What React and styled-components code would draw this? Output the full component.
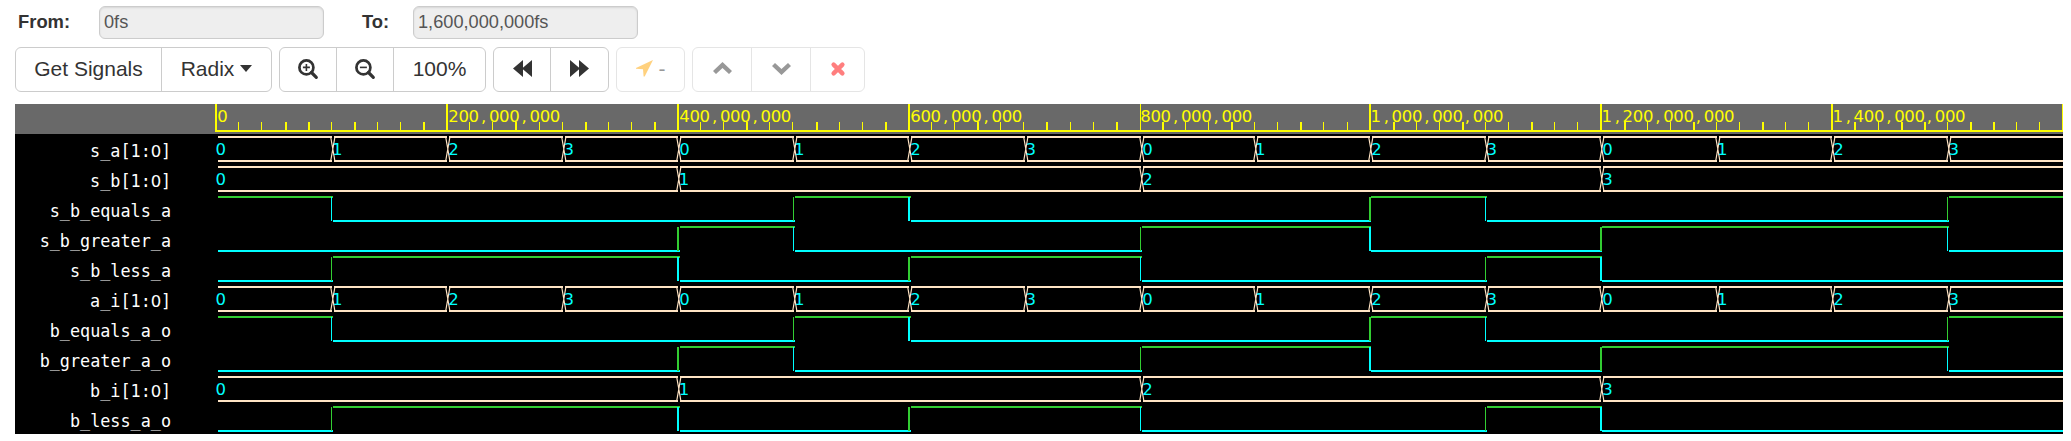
import React from "react";
import styled, { createGlobalStyle, css } from "styled-components";

const Global = createGlobalStyle`
  * { box-sizing: border-box; }
  body { margin: 0; background: #fff; color: #333; overflow: hidden; font-family: "Liberation Sans", Arial, sans-serif; }
`;

const Page = styled.main`
  height: 441px;
  width: 2071px;
  padding: 6px 8px 0 15px;
  overflow: hidden;
`;
const RangeForm = styled.div`
  display: flex;
  align-items: center;
  height: 33px;
`;
const RangeLabel = styled.label`
  width: ${(p) => p.$width}px;
  padding: 0 0 2px ${(p) => p.$inset}px;
  font-size: 18.4px;
  font-weight: 700;
  line-height: 29px;
`;
const RangeInput = styled.input`
  width: 225px;
  height: 33px;
  padding: 0 4px;
  border: 1px solid #ccc;
  border-radius: 6px;
  background: #eee;
  box-shadow: inset 0 1px 2px rgba(0, 0, 0, 0.1);
  color: #555;
  font: 18.2px "Liberation Sans", Arial, sans-serif;
`;
const Toolbar = styled.div`
  display: flex;
  gap: 7px;
  margin-top: 8px;
`;
const ButtonGroup = styled.div`
  display: flex;
  height: 45px;
  border: 1px solid #ccc;
  border-radius: 6px;
  opacity: ${(p) => (p.$disabled ? 0.5 : 1)};
`;
const ToolButton = styled.button`
  display: flex;
  align-items: center;
  justify-content: center;
  gap: 6px;
  width: ${(p) => p.$width}px;
  padding: 0 0 2px;
  border: 0;
  background: transparent;
  color: #333;
  font: 21px "Liberation Sans", Arial, sans-serif;
  white-space: nowrap;
  & + & { border-left: 1px solid #ccc; }
`;
const Glyph = styled.svg`
  display: block;
  overflow: visible;
  fill: currentColor;
  color: ${(p) => p.$color || "#333"};
`;
const Viewer = styled.section`
  display: flex;
  width: 2048px;
  height: 330px;
  margin-top: 12px;
  overflow: hidden;
  background: #000;
`;
const Names = styled.div`
  width: 200px;
`;
const NamesHead = styled.div`
  height: 30px;
  background: #696969;
`;
const digits = css`
  font-family: "DejaVu Sans", sans-serif;
  font-size: 16.5px;
`;
const SignalName = styled.div`
  height: 30px;
  padding: 2px 44px 0 0;
  color: #fff;
  font-family: "DejaVu Sans Mono", monospace;
  font-size: 16.8px;
  line-height: 30px;
  text-align: right;
  white-space: nowrap;
`;
const PlainZero = styled.span`
  ${digits}
  letter-spacing: -0.35px;
`;
const Chart = styled.svg`
  display: block;
  width: 1848px;
  height: 330px;
  text { ${digits} }
`;

const MAJOR = 230.87;
const PITCH = 10.15;
const END = 1848;

const signals = [
  { name: "s_a[1:0]", bus: "0123012301230123" },
  { name: "s_b[1:0]", bus: "0000111122223333" },
  { name: "s_b_equals_a", bits: "1000010000100001" },
  { name: "s_b_greater_a", bits: "0000100011001110" },
  { name: "s_b_less_a", bits: "0111001100010000" },
  { name: "a_i[1:0]", bus: "0123012301230123" },
  { name: "b_equals_a_o", bits: "1000010000100001" },
  { name: "b_greater_a_o", bits: "0000100011001110" },
  { name: "b_i[1:0]", bus: "0000111122223333" },
  { name: "b_less_a_o", bits: "0111001100010000" },
];

const majors = [
  "0", "200,000,000", "400,000,000", "600,000,000", "800,000,000",
  "1,000,000,000", "1,200,000,000", "1,400,000,000", "",
];

function runs(values) {
  const out = [];
  for (let i = 0; i < values.length; i++) {
    if (i === 0 || values[i] !== values[i - 1]) out.push({ start: i, end: i + 1, value: values[i] });
    else out[out.length - 1].end = i + 1;
  }
  return out;
}

// Pixel column and thickness of the i-th 100,000,000fs boundary.
const edge = (i) => {
  if (i === 8) return 925;
  return i % 2 ? Math.ceil((i * MAJOR) / 2) : Math.round((i * MAJOR) / 2);
};
const edgeWidth = (i) => (i % 2 || i === 8 ? 1 : 2);

// Monospaced advance for each character; the comma sits inside its cell.
const cells = (label, x) =>
  [...label].map((c, i) => (x + i * PITCH + (c === "," ? 2.2 : c === "1" ? -0.8 : 0)).toFixed(2)).join(" ");

// Tick thickness between two major marks, one digit per tick.
const tickWidths = [
  "112212112", "112112112", "112112112", "112112112",
  "211211211", "211211211", "211211211", "212212211",
];

function Ruler() {
  return (
    <g fill="#ff0">
      <g shapeRendering="crispEdges">
        <rect width={END} height={30} fill="#696969" />
        <rect y={26} width={END} height={2} />
        {tickWidths.map((group, m) =>
          [...group].map((w, k) => (
            <rect
              key={`${m}-${k}`}
              x={Math.round(((m * 10 + k + 1) * MAJOR) / 10 + 0.3)}
              y={18}
              width={w}
              height={9}
            />
          ))
        )}
        {majors.map((label, i) => (
          <rect key={i} x={edge(i * 2)} width={edgeWidth(i * 2)} height={28} />
        ))}
      </g>
      {majors.map((label, i) => (
        label && <text key={label} x={cells(label, Math.round(i * MAJOR) + 2.3)} y={18}>{label}</text>
      ))}
    </g>
  );
}

function BusWave({ values, top }) {
  const list = runs(values);
  return (
    <g stroke="#ffe4c4" fill="none">
      {list.map((r, i) => {
        const left = edge(r.start);
        const x1 = i ? left + 3 : 3;
        const x2 = r.end === 16 ? END : edge(r.end) + 1;
        const a = left - 0.3;
        const b = left + 3.9;
        return (
          <g key={r.start}>
            <path
              d={`M${x1} ${top + 3}H${x2}M${x1} ${top + 27}H${x2}`}
              strokeWidth="2"
              shapeRendering="crispEdges"
            />
            {i > 0 && (
              <path
                d={`M${a} ${top + 3}L${b} ${top + 27}M${b} ${top + 3}L${a} ${top + 27}`}
                strokeWidth="1.2"
              />
            )}
            <text
              x={(i ? left + (r.start % 2 ? 1.5 : 2.2) : 0.6) - (r.value === "1" ? 0.4 : 0)}
              y={top + 21}
              fill="#0ff"
              stroke="none"
            >
              {r.value}
            </text>
          </g>
        );
      })}
    </g>
  );
}

// Where a level line meets the edge at boundary i.
const joint = (i) => edge(i) + (i % 2 || i >= 8 ? 2 : 3);

function BitWave({ values, top }) {
  return (
    <g shapeRendering="crispEdges">
      {runs(values).map((r, i) => {
        const high = r.value === "1";
        const x1 = i ? joint(r.start) : 3;
        const x2 = r.end === 16 ? END : joint(r.end);
        return (
          <g key={r.start} fill={high ? "#32cd32" : "#0ff"}>
            <rect x={x1} y={top + (high ? 2 : 26)} width={x2 - x1} height={2} />
            {i > 0 && (
              <rect x={edge(r.start)} y={top + 3} width={edgeWidth(r.start)} height={24} />
            )}
          </g>
        );
      })}
    </g>
  );
}

const Magnifier = ({ plus }) => (
  <Glyph width="20" height="20" viewBox="0 0 20 20">
    <circle cx="8.400" cy="8.400" r="7" fill="none" stroke="currentColor" strokeWidth="2.700" />
    <path d="m13.500 13.500 4.800 4.800" stroke="currentColor" strokeWidth="3.200" strokeLinecap="round" />
    <path d={plus ? "M4.900 8.400h7M8.400 4.900v7" : "M4.900 8.400h7"} stroke="currentColor" strokeWidth="1.600" />
  </Glyph>
);

export default function App() {
  return (
    <Page>
      <Global />
      <RangeForm>
        <RangeLabel $width={84} $inset={3}>From:</RangeLabel>
        <RangeInput readOnly value="0fs" />
        <RangeLabel $width={89} $inset={38}>To:</RangeLabel>
        <RangeInput readOnly value="1,600,000,000fs" />
      </RangeForm>
      <Toolbar>
        <ButtonGroup>
          <ToolButton $width={145}>Get Signals</ToolButton>
          <ToolButton $width={110}>
            Radix
            <Glyph width="12" height="7" viewBox="0 0 12 7"><path d="M0 0h12L6 7Z" /></Glyph>
          </ToolButton>
        </ButtonGroup>
        <ButtonGroup>
          <ToolButton $width={56}><Magnifier plus /></ToolButton>
          <ToolButton $width={57}><Magnifier /></ToolButton>
          <ToolButton $width={92}>100%</ToolButton>
        </ButtonGroup>
        <ButtonGroup>
          <ToolButton $width={56}>
            <Glyph width="19" height="17" viewBox="0 0 19 17"><path d="M10 0v17L0 8.500ZM19 0v17L9 8.500Z" /></Glyph>
          </ToolButton>
          <ToolButton $width={58}>
            <Glyph width="19" height="17" viewBox="0 0 19 17"><path d="M0 0v17l10-8.500ZM9 0v17l10-8.500Z" /></Glyph>
          </ToolButton>
        </ButtonGroup>
        <ButtonGroup $disabled>
          <ToolButton $width={67}>
            <Glyph $color="orange" width="17" height="17" viewBox="0 0 17 17">
              <path d="M17 0 8.700 16.500 7.600 16.500 7 9.200 0 8.800 0 8Z" />
            </Glyph>
            -
          </ToolButton>
        </ButtonGroup>
        <ButtonGroup $disabled>
          <ToolButton $width={58}>
            <Glyph width="19" height="13" viewBox="0 0 19 13"><path d="M9.500 0 19 9l-3 3-6.500-6L3 12 0 9Z" /></Glyph>
          </ToolButton>
          <ToolButton $width={59}>
            <Glyph width="19" height="13" viewBox="0 0 19 13"><path d="M9.500 13 19 4l-3-3-6.500 6L3 1 0 4Z" /></Glyph>
          </ToolButton>
          <ToolButton $width={54}>
            <Glyph $color="red" width="14" height="14" viewBox="0 0 14 14">
              <path d="m2.600 2.600 8.800 8.800M11.400 2.600l-8.800 8.800" stroke="currentColor" strokeWidth="4.400" strokeLinecap="round" />
            </Glyph>
          </ToolButton>
        </ButtonGroup>
      </Toolbar>
      <Viewer>
        <Names>
          <NamesHead />
          {signals.map(({ name }) => (
            <SignalName key={name}>
              {name.split("0").map((part, i) => (
                <React.Fragment key={i}>{i > 0 && <PlainZero>0</PlainZero>}{part}</React.Fragment>
              ))}
            </SignalName>
          ))}
        </Names>
        <Chart>
          <Ruler />
          {signals.map((s, i) =>
            s.bus
              ? <BusWave key={s.name} values={s.bus} top={30 + i * 30} />
              : <BitWave key={s.name} values={s.bits} top={30 + i * 30} />
          )}
        </Chart>
      </Viewer>
    </Page>
  );
}
